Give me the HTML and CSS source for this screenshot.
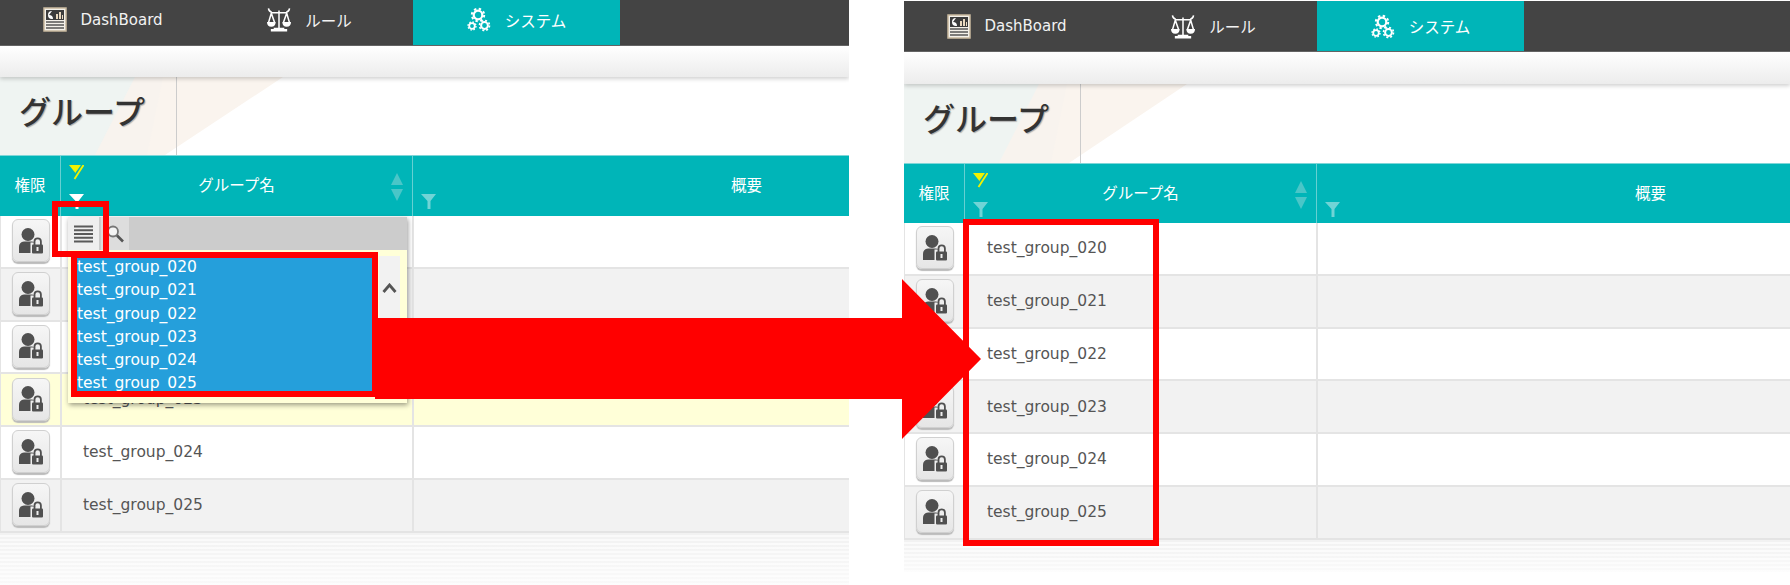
FILE: index.html
```html
<!DOCTYPE html>
<html lang="ja">
<head>
  <meta charset="UTF-8">
  <title>グループ</title>
  <link rel="stylesheet" href="styles.css">
</head>
<body>
  <svg class="defs" width="0" height="0">
    <symbol id="i-dash" viewBox="0 0 24 25">
      <rect x="1" y="1" width="22" height="23" fill="#f4f1ea" stroke="#c9b99f" stroke-width="1.5"/>
      <rect x="3" y="3" width="18" height="10" fill="#3c3c3c"/>
      <path d="M9 4a4 4 0 1 0 0 8h1a4 4 0 0 0-4-4z" fill="#fff"/>
      <path d="M13 12V7h2v5zM16 12V5h2v7zM19 12V8h1v4z" fill="#e9d9c0"/>
      <path d="M3 15h18M3 18h18M3 21h18" stroke="#555" stroke-width="1.4"/>
    </symbol>
    <symbol id="i-scale" viewBox="0 0 25 25">
      <g fill="none" stroke="#fff" stroke-width="1.600">
        <path d="M12.500 3v18M4 5.500h17M7 22h11"/>
        <path d="M1.500 1q.5 3.500 3.500 4M23.500 1q-.5 3.500-3.500 4"/>
        <path d="M4.500 6 1.500 16M4.500 6l3.500 10M20.500 6 17 16M20.500 6l3 10"/>
      </g>
      <path d="M0 15h9q0 5-4.500 5T0 15zM16 15h9q0 5-4.500 5T16 15zM4 22.500h17V25H4z" fill="#fff"/>
    </symbol>
    <symbol id="i-gear" viewBox="0 0 24 24">
      <g fill="none" stroke="#fff">
        <circle cx="11" cy="7.500" r="4.300" stroke-width="2.200"/>
        <circle cx="11" cy="7.500" r="6.200" stroke-width="2" stroke-dasharray="2.400 2.470"/>
        <circle cx="5" cy="18.500" r="2.800" stroke-width="1.800"/>
        <circle cx="5" cy="18.500" r="4" stroke-width="1.400" stroke-dasharray="1.500 1.640"/>
        <circle cx="17.500" cy="18" r="3.400" stroke-width="2"/>
        <circle cx="17.500" cy="18" r="5" stroke-width="1.600" stroke-dasharray="2 1.930"/>
      </g>
    </symbol>
    <symbol id="i-user" viewBox="0 0 24 26">
      <circle cx="9" cy="6.500" r="6.500" fill="#505050"/>
      <path d="M0 25v-6q0-5 5-5.500h8q5 .5 5 5.500v6z" fill="#505050"/>
      <rect x="11.500" y="14.500" width="12.500" height="11.500" fill="#eee"/>
      <path d="M15.500 17v-3.500a3.200 3.200 0 0 1 6.400 0V17" fill="none" stroke="#505050" stroke-width="1.800"/>
      <rect x="13" y="16.500" width="11" height="9" rx="1" fill="#505050"/>
      <rect x="17.500" y="19" width="2" height="4" fill="#eee"/>
    </symbol>
    <symbol id="i-funnel" viewBox="0 0 15 15">
      <path d="M0 0h15L9.500 7v8h-3V7z"/>
    </symbol>
    <symbol id="i-filter-off" viewBox="0 0 15 15">
      <path d="M0 0h15L8.500 7.500V11H6V7.500z" fill="#f2f200"/>
      <path d="M14 0 5 13" stroke="#00b5b8" stroke-width="3.500"/>
      <path d="M14.500 0 5.500 14" stroke="#f2f200" stroke-width="1.800"/>
    </symbol>
  </svg>

  <main class="stage">
    <section class="pane pane-left">
      <nav class="nav">
        <a class="tab"><svg class="tab-icon"><use href="#i-dash"/></svg>DashBoard</a>
        <a class="tab tab-ja"><svg class="tab-icon"><use href="#i-scale"/></svg>ルール</a>
        <a class="tab tab-ja tab-on"><svg class="tab-icon"><use href="#i-gear"/></svg>システム</a>
      </nav>
      <div class="subbar"></div>
      <header class="title">
        <svg class="title-bg" viewBox="0 0 290 80" preserveAspectRatio="none">
          <path d="M0 0H283L165 80H0z" fill="#faf4ee"/>
          <path d="M0 0H163L147 80H0z" fill="#f8f3ee"/>
          <path d="M0 0H135L95 80H0z" fill="#eff4f2"/>
        </svg>
        <h1>グループ</h1>
      </header>
      <div class="grid">
        <div class="head">
          <div class="cell cell-auth">権限</div>
          <div class="cell cell-name">
            <svg class="flt-off"><use href="#i-filter-off"/></svg>
            グループ名
            <svg class="flt flt-white"><use href="#i-funnel"/></svg>
            <span class="sort"><i class="sort-up"></i><i class="sort-down"></i></span>
          </div>
          <div class="cell cell-desc">
            概要
            <svg class="flt"><use href="#i-funnel"/></svg>
          </div>
        </div>
        <div class="row">
          <div class="cell cell-auth"><button class="auth-btn"><svg><use href="#i-user"/></svg></button></div>
          <div class="cell cell-name">test_group_020</div>
          <div class="cell cell-desc"></div>
        </div>
        <div class="row">
          <div class="cell cell-auth"><button class="auth-btn"><svg><use href="#i-user"/></svg></button></div>
          <div class="cell cell-name">test_group_021</div>
          <div class="cell cell-desc"></div>
        </div>
        <div class="row">
          <div class="cell cell-auth"><button class="auth-btn"><svg><use href="#i-user"/></svg></button></div>
          <div class="cell cell-name">test_group_022</div>
          <div class="cell cell-desc"></div>
        </div>
        <div class="row row-hover">
          <div class="cell cell-auth"><button class="auth-btn"><svg><use href="#i-user"/></svg></button></div>
          <div class="cell cell-name">test_group_023</div>
          <div class="cell cell-desc"></div>
        </div>
        <div class="row">
          <div class="cell cell-auth"><button class="auth-btn"><svg><use href="#i-user"/></svg></button></div>
          <div class="cell cell-name">test_group_024</div>
          <div class="cell cell-desc"></div>
        </div>
        <div class="row">
          <div class="cell cell-auth"><button class="auth-btn"><svg><use href="#i-user"/></svg></button></div>
          <div class="cell cell-name">test_group_025</div>
          <div class="cell cell-desc"></div>
        </div>
      </div>
      <div class="stripes"></div>

      <div class="popup">
        <div class="popup-tools">
          <span class="tool tool-on">
            <svg width="19" height="18" viewBox="0 0 19 18"><path d="M0 1.500h19M0 5.250h19M0 9h19M0 12.750h19M0 16.500h19" stroke="#5a5a5a" stroke-width="2"/></svg>
          </span>
          <span class="tool">
            <svg width="18" height="20" viewBox="0 0 18 20"><circle cx="7" cy="7.500" r="5" fill="#f4f4f4" stroke="#777" stroke-width="1.800"/><path d="m11 11.500 6 6" stroke="#555" stroke-width="2.600"/></svg>
          </span>
        </div>
        <div class="popup-body">
          <ul class="pick-list">
            <li>test_group_020</li>
            <li>test_group_021</li>
            <li>test_group_022</li>
            <li>test_group_023</li>
            <li>test_group_024</li>
            <li>test_group_025</li>
          </ul>
          <div class="pick-scroll">
            <svg width="15" height="10" viewBox="0 0 15 10"><path d="M1.500 9 7.500 2l6 7" fill="none" stroke="#555" stroke-width="2.800"/></svg>
          </div>
        </div>
      </div>
    </section>

    <section class="pane pane-right">
      <nav class="nav">
        <a class="tab"><svg class="tab-icon"><use href="#i-dash"/></svg>DashBoard</a>
        <a class="tab tab-ja"><svg class="tab-icon"><use href="#i-scale"/></svg>ルール</a>
        <a class="tab tab-ja tab-on"><svg class="tab-icon"><use href="#i-gear"/></svg>システム</a>
      </nav>
      <div class="subbar"></div>
      <header class="title">
        <svg class="title-bg" viewBox="0 0 290 80" preserveAspectRatio="none">
          <path d="M0 0H283L165 80H0z" fill="#faf4ee"/>
          <path d="M0 0H163L147 80H0z" fill="#f8f3ee"/>
          <path d="M0 0H135L95 80H0z" fill="#eff4f2"/>
        </svg>
        <h1>グループ</h1>
      </header>
      <div class="grid">
        <div class="head">
          <div class="cell cell-auth">権限</div>
          <div class="cell cell-name">
            <svg class="flt-off"><use href="#i-filter-off"/></svg>
            グループ名
            <svg class="flt"><use href="#i-funnel"/></svg>
            <span class="sort"><i class="sort-up"></i><i class="sort-down"></i></span>
          </div>
          <div class="cell cell-desc">
            概要
            <svg class="flt"><use href="#i-funnel"/></svg>
          </div>
        </div>
        <div class="row">
          <div class="cell cell-auth"><button class="auth-btn"><svg><use href="#i-user"/></svg></button></div>
          <div class="cell cell-name">test_group_020</div>
          <div class="cell cell-desc"></div>
        </div>
        <div class="row">
          <div class="cell cell-auth"><button class="auth-btn"><svg><use href="#i-user"/></svg></button></div>
          <div class="cell cell-name">test_group_021</div>
          <div class="cell cell-desc"></div>
        </div>
        <div class="row">
          <div class="cell cell-auth"><button class="auth-btn"><svg><use href="#i-user"/></svg></button></div>
          <div class="cell cell-name">test_group_022</div>
          <div class="cell cell-desc"></div>
        </div>
        <div class="row">
          <div class="cell cell-auth"><button class="auth-btn"><svg><use href="#i-user"/></svg></button></div>
          <div class="cell cell-name">test_group_023</div>
          <div class="cell cell-desc"></div>
        </div>
        <div class="row">
          <div class="cell cell-auth"><button class="auth-btn"><svg><use href="#i-user"/></svg></button></div>
          <div class="cell cell-name">test_group_024</div>
          <div class="cell cell-desc"></div>
        </div>
        <div class="row">
          <div class="cell cell-auth"><button class="auth-btn"><svg><use href="#i-user"/></svg></button></div>
          <div class="cell cell-name">test_group_025</div>
          <div class="cell cell-desc"></div>
        </div>
      </div>
      <div class="stripes"></div>
    </section>

    <!-- annotations drawn on top of the two screens -->
    <div class="mark mark-tool"></div>
    <div class="mark mark-list"></div>
    <div class="mark mark-result"></div>
    <svg class="arrow" width="606" height="160" viewBox="0 0 606 160">
      <path d="M0 39H527V0L606 80 527 160V120H0z" fill="#f00"/>
    </svg>
  </main>
</body>
</html>
```

FILE: styles.css
```css
html, body {
  margin: 0;
  padding: 0;
  background: white;
  overflow: hidden;
}

body {
  font-family: "DejaVu Sans", "Noto Sans CJK JP", sans-serif;
  color: #555;
}

.defs {
  display: block;
  position: absolute;
}

.stage {
  position: relative;
  display: flex;
  align-items: flex-start;
  gap: 55px;
  width: 1790px;
  height: 585px;
  overflow: hidden;
}

.pane {
  position: relative;
  display: flex;
  flex-direction: column;
  overflow: hidden;
}

.pane-left {
  width: 849px;
  height: 585px;
}

.pane-right {
  width: 886px;
  height: 571px;
  margin-top: 1px;
}

/* top nav, the left screen is cropped a little at its top */
.nav {
  display: flex;
  flex: none;
  height: 45px;
  background: #444;
  border-bottom: 1px solid #666;
  box-sizing: content-box;
}

.pane-right .nav {
  height: 50px;
}

.tab {
  display: flex;
  align-items: center;
  justify-content: center;
  gap: 13px;
  width: 207px;
  box-sizing: border-box;
  padding-bottom: 6px;
  color: #f2f2f2;
  font-size: 15px;
}

.pane-right .tab {
  padding-bottom: 0;
}

.tab:first-child {
  width: 206px;
}

.tab-ja {
  font-size: 15.5px;
  gap: 14px;
}

.tab-on {
  background: #00b5b8;
  color: #fff;
}

.tab-icon {
  width: 24px;
  height: 25px;
  flex: none;
}

.subbar {
  flex: none;
  height: 31px;
  background: linear-gradient(#fff, #ececec);
  box-shadow: 0 2px 4px rgba(0, 0, 0, 0.18);
  position: relative;
  z-index: 1;
}

.pane-right .subbar {
  height: 32px;
}

/* page title */
.title {
  position: relative;
  flex: none;
  box-sizing: border-box;
  width: 177px;
  height: 78px;
  display: flex;
  align-items: center;
}

.title::after {
  content: "";
  position: absolute;
  top: 0;
  right: 0;
  bottom: 0;
  border-right: 1px solid #ccc;
}

.pane-right .title {
  height: 79px;
}

.title-bg {
  position: absolute;
  top: 0;
  left: 0;
  width: 290px;
  height: 100%;
}

.title h1 {
  position: relative;
  margin: 0 0 13px 19px;
  color: #333;
  font-size: 32px;
  font-weight: 500;
  white-space: nowrap;
  text-shadow: 1px 1px 1px #aaa;
}

/* group table */
.grid {
  flex: none;
  width: 1081px;
}

.head,
.row {
  display: grid;
  grid-template-columns: 61px 352px 668px;
}

.head {
  height: 61px;
  background: #00b5b8;
  color: #fff;
  font-size: 15.5px;
  border-top: 1px solid #7fd6d8;
  box-sizing: border-box;
}

.pane-right .head {
  height: 60px;
}

.head .cell {
  position: relative;
  display: flex;
  align-items: center;
  justify-content: center;
  padding: 0 0 5px;
  border-right: 1px solid #66d0d2;
  border-left: 1px solid #66d0d2;
  margin-left: -1px;
}

.pane-right .head .cell {
  padding-bottom: 3px;
}

.row {
  height: 52.75px;
  box-sizing: border-box;
  border-bottom: 2px solid #e4e4e4;
  border-left: 1px solid #e4e4e4;
  background: #fff;
}

.row:nth-child(odd) {
  background: #f2f2f2;
}

.row.row-hover {
  background: #ffffd8;
}

.row .cell {
  display: flex;
  align-items: center;
  border-right: 2px solid #e4e4e4;
  font-size: 15.5px;
  padding-bottom: 1px;
  box-sizing: border-box;
}

.pane-right .row .cell {
  padding-bottom: 0;
}

.row .cell-auth,
.pane-right .row .cell-auth {
  justify-content: center;
  padding: 0 0 1px 1px;
}

.row .cell-name {
  padding-left: 21px;
}

.auth-btn {
  display: flex;
  align-items: center;
  justify-content: center;
  width: 38px;
  height: 43px;
  padding: 0;
  border: 1px solid #d0d0d0;
  border-radius: 6px;
  background: linear-gradient(#f6f6f6, #e6e6e6);
  box-shadow: 0 2px 1px #bbb;
}

.auth-btn svg {
  width: 24px;
  height: 26px;
}

.flt,
.flt-off {
  position: absolute;
  left: 8px;
  width: 15px;
  height: 15px;
}

.flt {
  top: 38px;
  fill: #70d4d6;
}

.flt-white {
  fill: #fff;
}

.flt-off {
  top: 9px;
}

.sort {
  position: absolute;
  top: 17px;
  right: 9px;
  display: flex;
  flex-direction: column;
  gap: 4px;
}

.sort i {
  display: block;
  width: 0;
  height: 0;
  border-left: 6px solid transparent;
  border-right: 6px solid transparent;
}

.sort-up {
  border-bottom: 12px solid #4ac6c8;
}

.sort-down {
  border-top: 12px solid #4ac6c8;
}

.stripes {
  flex: 1;
  background:
    linear-gradient(rgba(255, 255, 255, 0), rgba(255, 255, 255, 0.6)),
    repeating-linear-gradient(#f2f2f2 0, #f2f2f2 2px, #fafafa 2px, #fafafa 4px);
}

/* filter popup on the left screen */
.popup {
  position: absolute;
  top: 217px;
  left: 68px;
  width: 339px;
  height: 186px;
  background: #ffffd8;
  box-shadow: 1px 2px 5px rgba(0, 0, 0, 0.4);
  z-index: 2;
}

.popup-tools {
  display: flex;
  gap: 2px;
  height: 33px;
  background: #ccc;
}

.tool {
  display: flex;
  align-items: center;
  justify-content: center;
  width: 28px;
  height: 33px;
  background: #ddd;
}

.tool-on {
  width: 31px;
  background: #efefef;
}

.popup-body {
  display: flex;
  padding: 6px 7px 0 9px;
}

.pick-list {
  flex: none;
  width: 295px;
  height: 135px;
  margin: 1px 0 0;
  padding: 0;
  list-style: none;
  background: #259fdb;
  color: #fff;
  font-size: 15.5px;
  line-height: 23.3px;
  overflow: hidden;
}

.pick-list li {
  position: relative;
  top: -1px;
}

.pick-scroll {
  width: 21px;
  height: 142px;
  margin-left: 7px;
  padding-top: 22px;
  box-sizing: border-box;
  background: #f2f2f2;
  text-align: center;
}

/* red annotations */
.mark {
  position: absolute;
  box-sizing: border-box;
  border: 6px solid #f00;
  z-index: 3;
}

.mark-tool {
  top: 201px;
  left: 52px;
  width: 57px;
  height: 56px;
}

.mark-list {
  top: 252px;
  left: 71px;
  width: 307px;
  height: 145px;
}

.mark-result {
  top: 219px;
  left: 963px;
  width: 196px;
  height: 327px;
}

.arrow {
  position: absolute;
  top: 279px;
  left: 375px;
  z-index: 3;
}
```
